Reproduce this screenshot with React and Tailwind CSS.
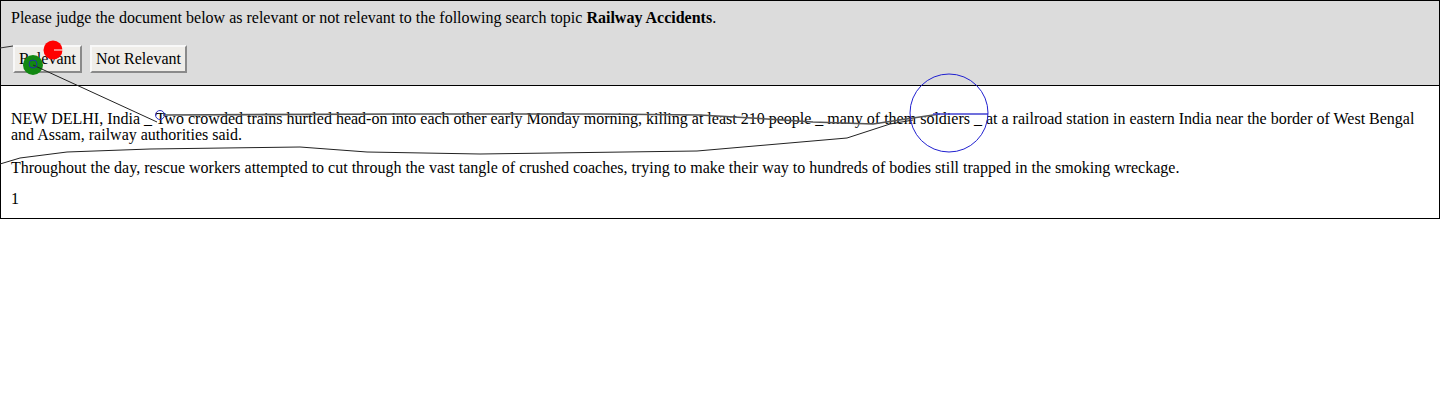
import React from "react";

const serif = { fontFamily: '"Liberation Serif", "Times New Roman", serif' };

function Overlay() {
  return (
    <svg
      className="absolute left-0 top-0 pointer-events-none"
      width="1440"
      height="400"
      viewBox="0 0 1440 400"
    >
      <polyline points="0,48 13,46" fill="none" stroke="#333" strokeWidth="1" />
      <polyline
        points="163,115 400,114 600,114 700,115 767,119 813,122 873,124 913,118 940,114"
        fill="none"
        stroke="#555"
        strokeWidth="1.6"
      />
      <polyline
        points="913,120 890,124 847,138 697,151 480,154 367,152 300,147 150,149 67,152 20,158 0,164"
        fill="none"
        stroke="#222"
        strokeWidth="1"
      />
      <line x1="933" y1="114" x2="988" y2="114" stroke="#4040d0" strokeWidth="1.6" />
      <circle cx="949" cy="113" r="39" fill="none" stroke="#2020d0" strokeWidth="1" />
      <circle cx="53" cy="50" r="9.5" fill="#ff0000" />
      <line x1="54" y1="50" x2="63" y2="50" stroke="#fff" strokeWidth="1" />
      <circle cx="33" cy="65" r="10" fill="#118811" />
      <line x1="33" y1="65" x2="157" y2="122" stroke="#222" strokeWidth="1" />
      <circle cx="33" cy="64" r="4" fill="none" stroke="#2030a0" strokeWidth="1" />
      <circle cx="160" cy="115" r="4.5" fill="none" stroke="#3030c0" strokeWidth="1" />
    </svg>
  );
}

function Btn({ children, className }) {
  return (
    <button
      className={
        "h-[28px] px-0 flex items-center justify-center bg-[#efede9] border-2 border-t-[#f8f8f8] border-l-[#f8f8f8] border-r-[#8a8a8a] border-b-[#8a8a8a] text-[16px] leading-[20px] text-black " +
        className
      }
      style={serif}
    >
      {children}
    </button>
  );
}

export default function App() {
  return (
    <div className="relative w-[1440px] h-[400px] bg-white text-black" style={serif}>
      <div className="border border-black">
        <div className="bg-[#dcdcdc] px-[10px] pt-[8px] pb-[12px] border-b border-black">
          <p className="text-[16px] leading-[18px]">
            Please judge the document below as relevant or not relevant to the following search topic{" "}
            <b>Railway Accidents</b>.
          </p>
          <div className="flex gap-[8px] mt-[18px] pl-[2px]">
            <Btn className="w-[69px]">Relevant</Btn>
            <Btn className="w-[97px]">Not Relevant</Btn>
          </div>
        </div>
        <div className="px-[10px] pt-[25px] pb-[11px] text-[16px] leading-[16px]">
          <p>
            NEW DELHI, India _ Two crowded trains hurtled head-on into each other early Monday morning, killing at least 210 people _ many of them soldiers _ at a railroad station in eastern India near the border of West Bengal and Assam, railway authorities said.
          </p>
          <p className="mt-[17px]">
            Throughout the day, rescue workers attempted to cut through the vast tangle of crushed coaches, trying to make their way to hundreds of bodies still trapped in the smoking wreckage.
          </p>
          <p className="mt-[15px]">1</p>
        </div>
      </div>
      <Overlay />
    </div>
  );
}
